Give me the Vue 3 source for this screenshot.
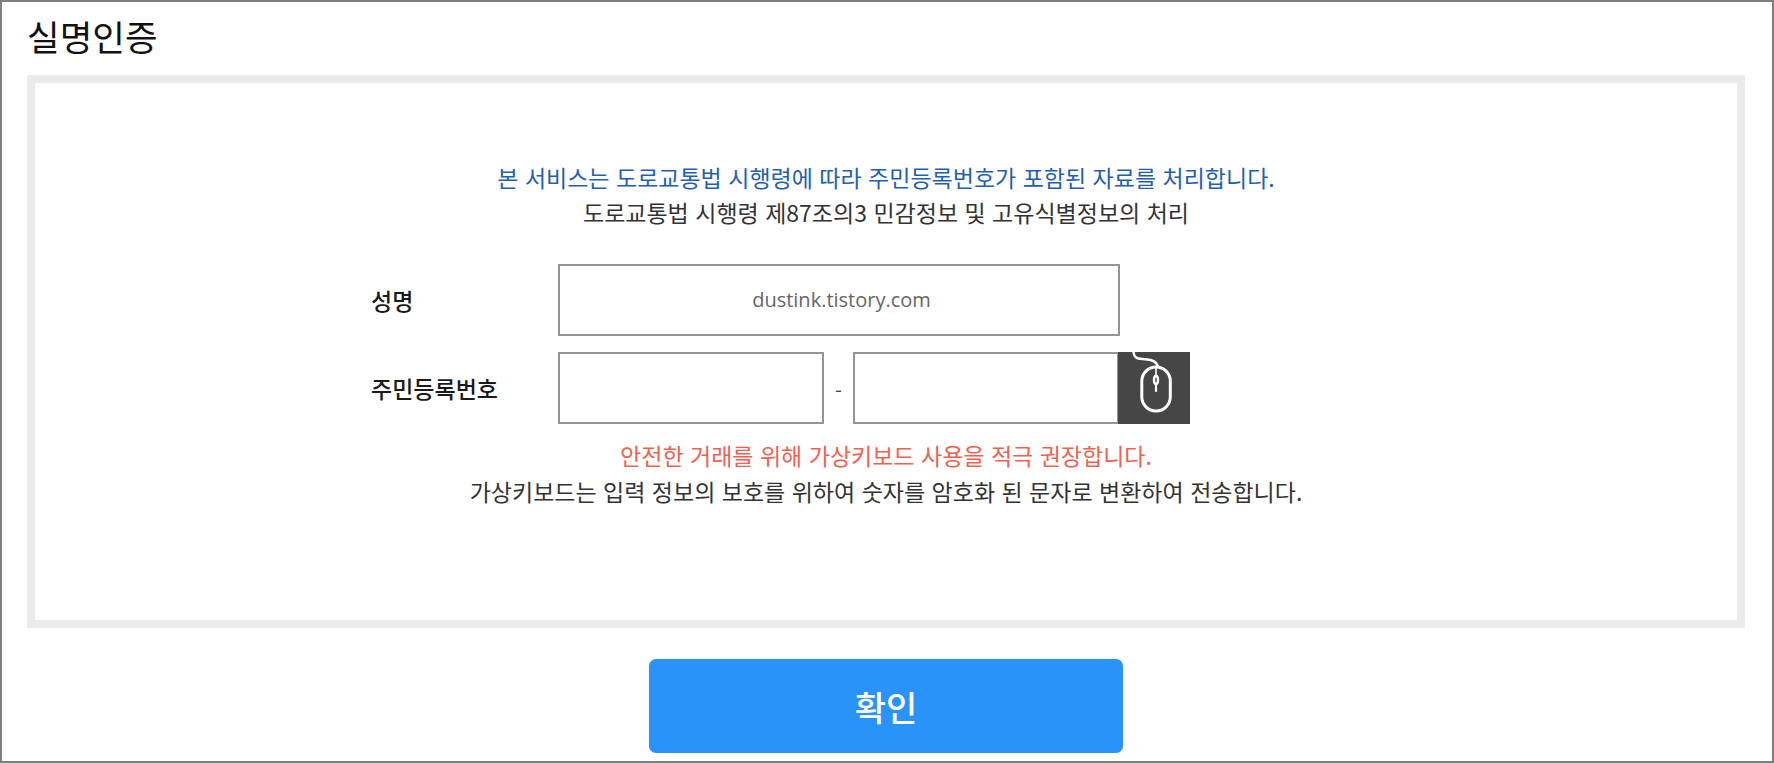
<script setup>
const title = '실명인증'
</script>

<template>
  <div class="frame">
    <h1 class="title">{{ title }}</h1>
    <section class="box">
      <p class="notice blue">본 서비스는 도로교통법 시행령에 따라 주민등록번호가 포함된 자료를 처리합니다.</p>
      <p class="notice sub">도로교통법 시행령 제87조의3 민감정보 및 고유식별정보의 처리</p>
      <div class="form">
        <div class="row">
          <label class="label">성명</label>
          <div class="input wide">dustink.tistory.com</div>
        </div>
        <div class="row">
          <label class="label">주민등록번호</label>
          <div class="input part"></div>
          <span class="dash">-</span>
          <div class="input part"></div>
          <div class="mouse">
            <svg width="72" height="72" viewBox="-1 0 72 72" fill="none" stroke="#fff" stroke-linecap="round">
              <path d="M14.500 0c.5 4 2 6 5 6.500 3 .5 8 .5 12 1.500 5 1.500 7 4 7.500 7" stroke-width="2.400" />
              <rect x="22.800" y="15" width="28.500" height="44" rx="14.200" stroke-width="3" />
              <path d="M37 15v9" stroke-width="1.600" />
              <ellipse cx="37" cy="28" rx="2" ry="4" stroke-width="2.400" />
              <path d="M37 32v7" stroke-width="2.200" />
            </svg>
          </div>
        </div>
      </div>
      <p class="notice red">안전한 거래를 위해 가상키보드 사용을 적극 권장합니다.</p>
      <p class="notice sub2">가상키보드는 입력 정보의 보호를 위하여 숫자를 암호화 된 문자로 변환하여 전송합니다.</p>
    </section>
    <div class="actions">
      <button class="confirm" type="button">확인</button>
    </div>
  </div>
</template>

<style>
html, body { margin: 0; padding: 0; background: #fff; }
</style>

<style scoped>
.frame {
  box-sizing: border-box;
  width: 1774px;
  height: 763px;
  border: 2px solid #7f7f7f;
  background: #fff;
  padding: 0 27px 0 25px;
  font-family: "Noto Sans CJK KR", "Noto Sans", sans-serif;
  overflow: hidden;
}
.title {
  margin: 0;
  height: 73px;
  padding-top: 11px;
  box-sizing: border-box;
  font-size: 35.500px;
  line-height: 46px;
  font-weight: 400;
  color: #111;
}
.box {
  box-sizing: border-box;
  height: 553px;
  border: 8px solid #ebebeb;
  padding-top: 77px;
  text-align: center;
}
.notice {
  margin: 0;
  font-size: 23px;
  word-spacing: 1.300px;
  line-height: 34px;
  height: 34px;
}
.blue { color: #1f5fb4; }
.sub { color: #333; margin-top: 1px; }
.red { color: #f2614f; margin-top: 14px; }
.sub2 { color: #333; margin-top: 2px; }
.form {
  margin-top: 35px;
  padding-left: 336px;
  display: flex;
  flex-direction: column;
  gap: 16px;
}
.row {
  display: flex;
  align-items: center;
  height: 72px;
}
.label {
  width: 187px;
  text-align: left;
  font-size: 23px;
  font-weight: 500;
  color: #1a1a1a;
}
.input {
  box-sizing: border-box;
  height: 72px;
  border: 2px solid #959595;
  background: #fff;
}
.wide {
  width: 562px;
  padding-left: 5px;
  font-family: "Open Sans", sans-serif;
  font-size: 20px;
  color: #666;
  line-height: 68px;
  text-align: center;
}
.part { width: 266px; }
.dash {
  width: 29px;
  text-align: center;
  font-size: 20px;
  color: #444;
}
.mouse {
  width: 72px;
  height: 72px;
  background: #464646;
  margin-left: -1px;
}
.mouse svg { display: block; }
.actions {
  display: flex;
  justify-content: center;
  padding-top: 31px;
}
.confirm {
  width: 474px;
  height: 94px;
  border: 0;
  border-radius: 7px;
  background: #2a93f9;
  color: #fff;
  font-family: inherit;
  font-size: 34px;
  font-weight: 500;
  padding: 0;
}
</style>
